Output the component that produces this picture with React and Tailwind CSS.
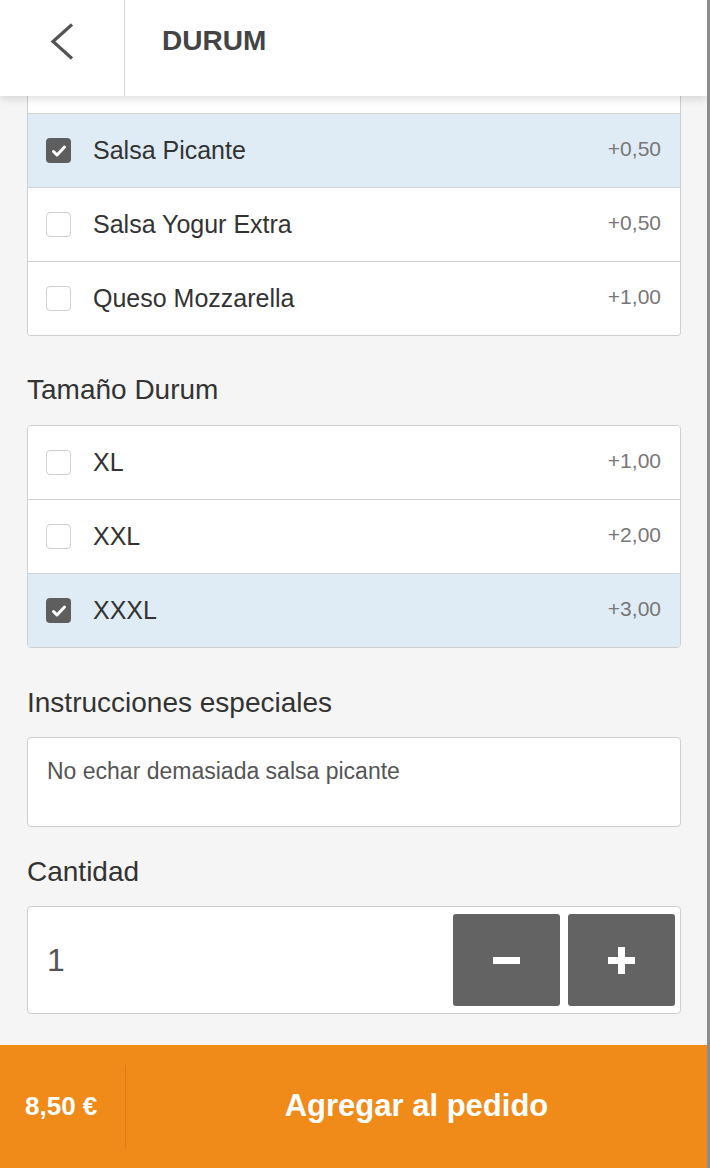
import React, { useState } from 'react';

const font = { fontFamily: '"Liberation Sans", Arial, sans-serif' };

const extras = [
  { name: 'Salsa Picante', price: '+0,50', checked: true },
  { name: 'Salsa Yogur Extra', price: '+0,50', checked: false },
  { name: 'Queso Mozzarella', price: '+1,00', checked: false },
];

const sizes = [
  { name: 'XL', price: '+1,00', checked: false },
  { name: 'XXL', price: '+2,00', checked: false },
  { name: 'XXXL', price: '+3,00', checked: true },
];

const Checkbox = ({ checked }) =>
  checked ? (
    <span className="flex items-center justify-center w-[25px] h-[25px] rounded-[4px] bg-[#5e5e5e]">
      <svg width="16" height="16" viewBox="0 0 16 16">
        <path d="M2.5 8.5l3.5 3.5 7.5-8" fill="none" stroke="#fff" strokeWidth="3" strokeLinecap="round" strokeLinejoin="round" />
      </svg>
    </span>
  ) : (
    <span className="block w-[25px] h-[25px] rounded-[4px] border-[1.5px] border-[#cfcfcf] bg-white"></span>
  );

const OptionRow = ({ item, first }) => (
  <div className={`flex items-center pl-[18px] pr-[19px] ${first ? 'h-[73px]' : 'h-[74px] border-t border-[#d2d2d2]'} ${item.checked ? 'bg-[#e0ecf5]' : 'bg-white'}`}>
    <Checkbox checked={item.checked} />
    <span className="ml-[22px] text-[25px] text-[#333]">{item.name}</span>
    <span className="ml-auto -mt-[4px] text-[21px] text-[#777]">{item.price}</span>
  </div>
);

const SectionLabel = ({ children, className }) => (
  <h3 className={`text-[28px] leading-[34px] text-[#333] ${className}`}>{children}</h3>
);

const App = () => {
  const [qty, setQty] = useState(1);

  return (
    <div style={font} className="h-screen w-full flex flex-col bg-[#f5f5f5] border-r-[3px] border-[#8c8c8c] overflow-hidden">
      {/* Header */}
      <header className="relative z-10 flex h-[96px] bg-white shadow-[0_3px_8px_rgba(0,0,0,0.13)]">
        <button className="w-[125px] border-r border-[#d6d6d6] flex items-center justify-center pb-[14px]">
          <svg width="24" height="37" viewBox="0 0 24 37">
            <path d="M22 1.5L3 18.5l19 17" fill="none" stroke="#555" strokeWidth="3.2" />
          </svg>
        </button>
        <div className="flex items-center pl-[37px] pb-[14px]">
          <h1 className="text-[28px] font-bold text-[#444]">DURUM</h1>
        </div>
      </header>

      {/* Scrolled content */}
      <main className="flex-1 overflow-hidden pl-[27px] pr-[26px]">
        <div className="bg-white border-x border-b border-[#cfcfcf] rounded-b-[4px] overflow-hidden">
          <div className="h-[17px]"></div>
          {extras.map((item) => (
            <OptionRow key={item.name} item={item} />
          ))}
        </div>

        <SectionLabel className="mt-[37px] mb-[18px]">Tamaño Durum</SectionLabel>
        <div className="bg-white border border-[#cfcfcf] rounded-[4px] overflow-hidden">
          {sizes.map((item, i) => (
            <OptionRow key={item.name} item={item} first={i === 0} />
          ))}
        </div>

        <SectionLabel className="mt-[38px] mb-[17px]">Instrucciones especiales</SectionLabel>
        <div className="h-[90px] bg-white border border-[#cfcfcf] rounded-[4px] px-[19px] pt-[16px] text-[23px] text-[#555]">
          No echar demasiada salsa picante
        </div>

        <SectionLabel className="mt-[28px] mb-[17px]">Cantidad</SectionLabel>
        <div className="h-[108px] flex items-center bg-white border border-[#cfcfcf] rounded-[4px] pl-[19px] pr-[5px]">
          <span className="text-[32px] text-[#555]">{qty}</span>
          <div className="ml-auto flex gap-[8px]">
            <button onClick={() => setQty(Math.max(1, qty - 1))} className="w-[107px] h-[92px] rounded-[3px] bg-[#636363] flex items-center justify-center">
              <svg width="27" height="27" viewBox="0 0 27 27">
                <rect x="0" y="10" width="27" height="7" fill="#fff" />
              </svg>
            </button>
            <button onClick={() => setQty(qty + 1)} className="w-[107px] h-[92px] rounded-[3px] bg-[#636363] flex items-center justify-center">
              <svg width="27" height="27" viewBox="0 0 27 27">
                <rect x="0" y="10" width="27" height="7" fill="#fff" />
                <rect x="10" y="0" width="7" height="27" fill="#fff" />
              </svg>
            </button>
          </div>
        </div>
      </main>

      {/* Footer */}
      <footer className="h-[123px] flex bg-[#f08b1a] text-white">
        <div className="w-[125px] flex items-center pl-[25px] text-[26px] font-bold">8,50 €</div>
        <div className="w-px my-[20px] bg-[#d97c14]"></div>
        <button className="flex-1 flex items-center justify-center text-[31px] font-bold">Agregar al pedido</button>
      </footer>
    </div>
  );
};

export default App;
